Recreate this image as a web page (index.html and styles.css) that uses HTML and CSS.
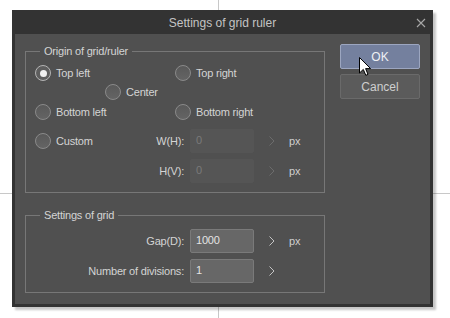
FILE: index.html
```html
<!DOCTYPE html>
<html lang="en">
<head>
    <meta charset="UTF-8">
    <meta name="viewport" content="width=device-width, initial-scale=1.0">
    <title>Settings of grid ruler</title>
    <link rel="stylesheet" href="styles.css">
</head>
<body>
    <div class="guide guide-v"></div>
    <div class="guide guide-h"></div>

    <div class="dialog">
        <div class="titlebar">
            <span class="title">Settings of grid ruler</span>
            <svg class="close" width="10" height="10" viewBox="0 0 10 10">
                <path d="M1 1 L9 9 M9 1 L1 9" stroke="#a8a8a8" stroke-width="1.1" fill="none"/>
            </svg>
        </div>

        <div class="content">
            <div class="groups">
                <fieldset class="group group-origin">
                    <legend>Origin of grid/ruler</legend>
                    <div class="origin-grid">
                        <label class="radio checked pos-tl"><span class="dot"></span>Top left</label>
                        <label class="radio pos-tr"><span class="dot"></span>Top right</label>
                        <label class="radio pos-c"><span class="dot"></span>Center</label>
                        <label class="radio pos-bl"><span class="dot"></span>Bottom left</label>
                        <label class="radio pos-br"><span class="dot"></span>Bottom right</label>
                    </div>
                    <div class="field-row">
                        <div class="field-label">
                            <label class="radio"><span class="dot"></span>Custom</label>
                            <span>W(H):</span>
                        </div>
                        <div class="input disabled">0</div>
                        <svg class="chev disabled" width="6" height="10" viewBox="0 0 6 10"><path d="M0.5 0.5 L5 5 L0.5 9.5" fill="none" stroke-width="1"/></svg>
                        <span class="unit">px</span>
                    </div>
                    <div class="field-row">
                        <div class="field-label"><span>H(V):</span></div>
                        <div class="input disabled">0</div>
                        <svg class="chev disabled" width="6" height="10" viewBox="0 0 6 10"><path d="M0.5 0.5 L5 5 L0.5 9.5" fill="none" stroke-width="1"/></svg>
                        <span class="unit">px</span>
                    </div>
                </fieldset>

                <fieldset class="group group-grid">
                    <legend>Settings of grid</legend>
                    <div class="field-row">
                        <div class="field-label"><span>Gap(D):</span></div>
                        <div class="input">1000</div>
                        <svg class="chev" width="6" height="10" viewBox="0 0 6 10"><path d="M0.5 0.5 L5 5 L0.5 9.5" fill="none" stroke-width="1"/></svg>
                        <span class="unit">px</span>
                    </div>
                    <div class="field-row">
                        <div class="field-label"><span>Number of divisions:</span></div>
                        <div class="input">1</div>
                        <svg class="chev" width="6" height="10" viewBox="0 0 6 10"><path d="M0.5 0.5 L5 5 L0.5 9.5" fill="none" stroke-width="1"/></svg>
                        <span class="unit"></span>
                    </div>
                </fieldset>
            </div>

            <div class="buttons">
                <button class="btn btn-ok">OK</button>
                <button class="btn">Cancel</button>
            </div>
        </div>
    </div>

    <!-- mouse pointer over the OK button -->
    <svg class="cursor" width="13" height="20" viewBox="0 0 13 20">
        <path d="M0.5 0.5 L0.5 16 L4.3 12.4 L6.8 18.3 L9 17.4 L6.6 11.6 L11.6 11.6 Z" fill="#fff" stroke="#000" stroke-width="1" stroke-linejoin="miter"/>
    </svg>
</body>
</html>
```

FILE: styles.css
```css
body {
    margin: 0;
    padding: 10px 0 0 12px;
    width: 450px;
    height: 318px;
    box-sizing: border-box;
    background-color: #fff;
    font-family: "Liberation Sans", Arial, sans-serif;
    font-size: 11px;
    letter-spacing: -0.2px;
    color: #d4d4d4;
    position: relative;
    overflow: hidden;
}

/* grid lines of the canvas behind the dialog */
.guide {
    position: absolute;
    background-color: #c8c8c8;
}

.guide-v {
    left: 218px;
    top: 0;
    width: 1px;
    height: 318px;
}

.guide-h {
    left: 0;
    top: 193px;
    width: 450px;
    height: 1px;
}

.dialog {
    position: relative;
    width: 421px;
    height: 297px;
    background-color: #333;
    box-shadow: 3px 3px 2px rgba(0, 0, 0, 0.22);
    display: flex;
    flex-direction: column;
}

.titlebar {
    height: 24px;
    display: flex;
    align-items: center;
    justify-content: center;
    position: relative;
}

.title {
    font-size: 12px;
    letter-spacing: 0;
    color: #c4c4c4;
    padding-top: 1px;
}

.close {
    position: absolute;
    right: 7px;
    top: 8px;
}

.content {
    flex: 1;
    margin: 0 3px 3px;
    background-color: #505050;
    display: flex;
    padding: 10px 10px 0 10px;
    gap: 15px;
}

.groups {
    width: 300px;
}

.group {
    margin: 0;
    padding: 0 0 9px 9px;
    border: 1px solid #777;
    min-width: 0;
}

.group legend {
    margin-left: 5px;
    padding: 0 4px;
    line-height: 14px;
    color: #d4d4d4;
}

.group-grid {
    margin-top: 15px;
    padding-top: 7px;
}

.origin-grid {
    display: grid;
    grid-template-columns: 70px 70px 1fr;
    grid-template-rows: 20px 17px 23px;
    margin-top: 5px;
}

.pos-tl { grid-column: 1 / 3; grid-row: 1; }
.pos-tr { grid-column: 3; grid-row: 1; }
.pos-c  { grid-column: 2 / 4; grid-row: 2; }
.pos-bl { grid-column: 1 / 3; grid-row: 3; }
.pos-br { grid-column: 3; grid-row: 3; }

.radio {
    display: flex;
    align-items: center;
    gap: 5px;
    white-space: nowrap;
}

.dot {
    width: 14px;
    height: 14px;
    border-radius: 50%;
    border: 1px solid #8a8a8a;
    background: linear-gradient(#595959, #646464);
    flex: none;
    position: relative;
}

.radio.checked .dot {
    border-color: #b4b4b4;
    background: #5e5e5e;
}

.radio.checked .dot::after {
    content: "";
    position: absolute;
    left: 3.5px;
    top: 3.5px;
    width: 7px;
    height: 7px;
    border-radius: 50%;
    background-color: #f0f0f0;
}

.field-row {
    display: grid;
    grid-template-columns: 155px 64px 35px auto;
    align-items: center;
    height: 24px;
    margin-top: 6px;
}

.group-grid .field-row:first-of-type {
    margin-top: 0;
}

.field-label {
    display: flex;
    justify-content: space-between;
    align-items: center;
    padding-right: 6px;
}

.field-label span:only-child {
    margin-left: auto;
}

.input {
    height: 24px;
    box-sizing: border-box;
    border: 1px solid #7a7a7a;
    border-radius: 2px;
    background-color: #676767;
    color: #e4e4e4;
    padding: 0 5px;
    line-height: 20px;
}

.input.disabled {
    border-color: #555;
    background-color: #555;
    color: #7a7a7a;
}

.chev {
    justify-self: center;
    stroke: #c4c4c4;
}

.chev.disabled {
    stroke: #6c6c6c;
}

.unit {
    color: #cfcfcf;
}

.buttons {
    display: flex;
    flex-direction: column;
    gap: 5px;
}

.btn {
    width: 80px;
    height: 25px;
    border: 1px solid #6a6a6a;
    border-radius: 2px;
    background-color: #5b5b5b;
    color: #cfcfcf;
    font-family: "Liberation Sans", Arial, sans-serif;
    font-size: 12px;
    padding: 0;
}

.btn-ok {
    background-color: #74809e;
    border-color: #9ca6c0;
    color: #eef0f4;
}

.cursor {
    position: absolute;
    left: 359px;
    top: 57px;
}
```
